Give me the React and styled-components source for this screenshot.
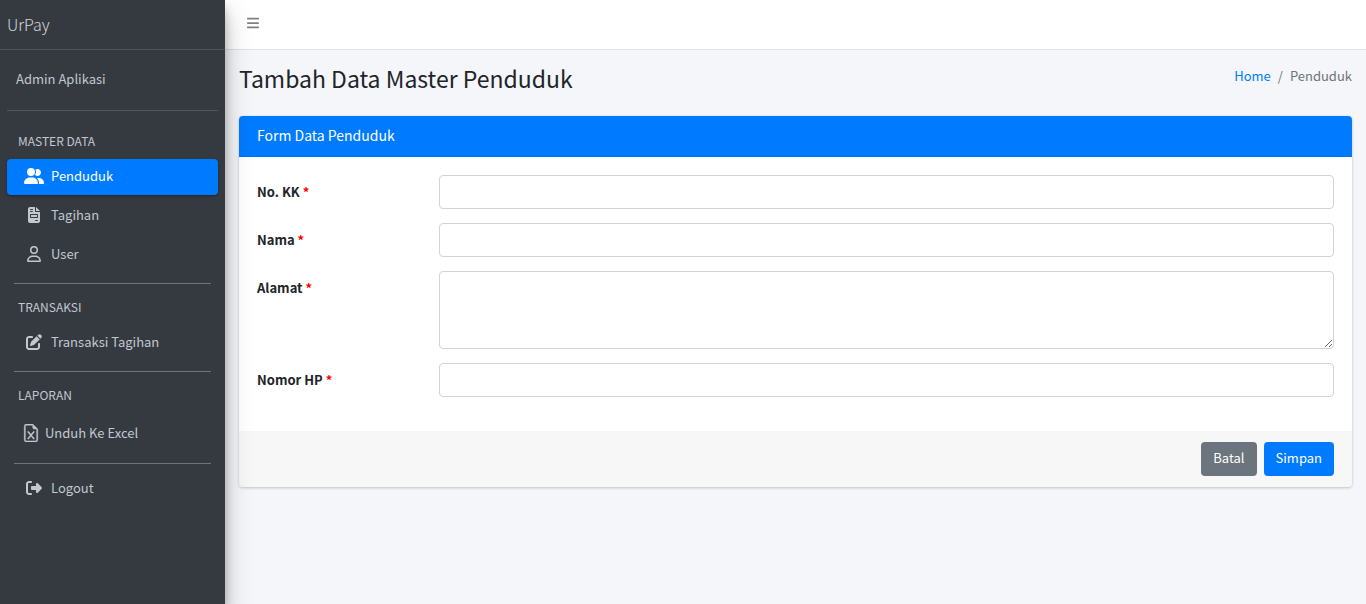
import React from "react";
import styled, { createGlobalStyle, css } from "styled-components";
import { FaBars, FaUserGroup, FaFileInvoice, FaRegUser, FaPenToSquare, FaRightFromBracket } from "react-icons/fa6";
import { BsFileEarmarkExcel } from "react-icons/bs";

const GlobalStyle = createGlobalStyle`
  *, *::before, *::after { box-sizing: border-box; }
  body {
    margin: 0;
    background: #f4f6f9;
    color: #212529;
    font-family: "Noto Sans CJK SC", "Noto Sans", sans-serif;
    font-size: 13px;
    line-height: 22px;
  }
  input, textarea, button { font: inherit; color: inherit; }
`;

const Page = styled.div`
  display: flex;
  min-height: 100vh;
`;

const Sidebar = styled.aside`
  position: relative;
  flex: 0 0 225px;
  background: #343a40;
  color: #c2c7d0;
  box-shadow: 0 13px 25px rgba(0, 0, 0, 0.25), 0 9px 9px rgba(0, 0, 0, 0.22);
`;

const Brand = styled.a`
  display: block;
  height: 50px;
  padding: 13px 7px;
  border-bottom: 1px solid #4b545c;
  color: rgba(255, 255, 255, 0.8);
  font-size: 16px;
  font-weight: 300;
  text-decoration: none;
`;

const SidebarBody = styled.div`
  padding: 0 7px;
`;

const UserPanel = styled.div`
  height: 61px;
  padding: 18px 9px;
  border-bottom: 1px solid #4f5962;
`;

const Menu = styled.nav`
  display: flex;
  flex-direction: column;
  padding-top: 14px;
`;

const MenuHeader = styled.h2`
  margin: 0;
  padding: 5px 11px 7px;
  font-size: 12px;
  font-weight: 400;
  line-height: 22px;
`;

const MenuLink = styled.a`
  display: flex;
  align-items: center;
  gap: ${(p) => (p.$compact ? "5px" : "4px")};
  height: ${(p) => (p.$compact ? "40px" : "36px")};
  margin-bottom: 3px;
  padding: ${(p) => (p.$compact ? "0 14px" : "0 14px 2px")};
  border-radius: 4px;
  color: inherit;
  text-decoration: none;
  ${(p) =>
    p.$active &&
    css`
      background: #007bff;
      color: #fff;
      box-shadow: 0 1px 3px rgba(0, 0, 0, 0.12), 0 1px 2px rgba(0, 0, 0, 0.24);
    `}
`;

const MenuIcon = styled.span`
  display: flex;
  justify-content: center;
  width: 26px;
  svg {
    width: ${(p) => (p.$wide ? "20px" : "16px")};
    height: 16px;
  }
  ${(p) =>
    p.$compact &&
    css`
      width: 19px;
      svg {
        width: 18px;
        height: 18px;
        stroke: currentColor;
        stroke-width: 0.4;
      }
    `}
`;

const Divider = styled.hr`
  width: calc(100% - 14px);
  margin: 7px;
  border: 0;
  border-top: 1px solid #6c757d;
`;

const Main = styled.div`
  flex: 1;
  min-width: 0;
`;

const Topbar = styled.header`
  display: flex;
  align-items: center;
  height: 50px;
  padding: 0 21px 3px;
  border-bottom: 1px solid #dee2e6;
  background: #fff;
`;

const ToggleButton = styled.button`
  display: flex;
  padding: 0;
  border: 0;
  background: none;
  color: #808080;
  font-size: 14px;
`;

const Content = styled.main`
  padding: 14px;
`;

const ContentHeader = styled.div`
  display: flex;
  justify-content: space-between;
  align-items: flex-start;
  margin-bottom: 23px;
`;

const PageTitle = styled.h1`
  margin: 0;
  font-size: 23px;
  font-weight: 400;
  line-height: 29px;
`;

const Breadcrumb = styled.nav`
  display: flex;
  gap: 7px;
  padding-top: 1px;
  color: #6c757d;
  a { color: #007bff; text-decoration: none; }
`;

const Card = styled.form`
  border-radius: 4px;
  background: #fff;
  box-shadow: 0 0 1px rgba(0, 0, 0, 0.13), 0 1px 3px rgba(0, 0, 0, 0.2);
  overflow: hidden;
`;

const CardHeader = styled.h2`
  margin: 0;
  padding: 8px 18px 10px;
  border-bottom: 1px solid #0071eb;
  background: #007bff;
  color: #fff;
  font-size: 14px;
  font-weight: 400;
  line-height: 22px;
`;

const CardBody = styled.div`
  display: flex;
  flex-direction: column;
  gap: 14px;
  padding: 18px 18px 34px;
`;

const FormRow = styled.div`
  display: grid;
  grid-template-columns: 1fr 5fr;
  column-gap: 3px;
  align-items: start;
`;

const Label = styled.label`
  padding-top: 6px;
  font-weight: 700;
`;

const Required = styled.span`
  color: red;
`;

const Control = styled.input`
  display: block;
  width: 100%;
  height: ${(p) => (p.as === "textarea" ? "78px" : "34px")};
  padding: 5px 11px;
  border: 1px solid #ced4da;
  border-radius: 4px;
  background: #fff;
  resize: vertical;
`;

const CardFooter = styled.div`
  display: flex;
  justify-content: flex-end;
  gap: 7px;
  padding: 11px 18px;
  background: #f7f7f7;
`;

const Button = styled.button`
  height: 34px;
  padding: 0 12px 2px;
  border: 0;
  border-radius: 4px;
  background: ${(p) => (p.$primary ? "#007bff" : "#6c757d")};
  color: #fff;
`;

function MenuItem({ icon: Icon, label, active, compact, wide }) {
  return (
    <MenuLink href="#" $active={active} $compact={compact} aria-current={active ? "page" : undefined}>
      <MenuIcon $compact={compact} $wide={wide}><Icon aria-hidden="true" /></MenuIcon>
      {label}
    </MenuLink>
  );
}

function Field({ id, label, multiline }) {
  return (
    <FormRow>
      <Label htmlFor={id}>{label} <Required>*</Required></Label>
      <Control id={id} name={id} as={multiline ? "textarea" : "input"} required />
    </FormRow>
  );
}

export default function App() {
  return (
    <>
      <GlobalStyle />
      <Page>
        <Sidebar>
          <Brand href="#">UrPay</Brand>
          <SidebarBody>
            <UserPanel>Admin Aplikasi</UserPanel>
            <Menu>
              <MenuHeader>MASTER DATA</MenuHeader>
              <MenuItem icon={FaUserGroup} label="Penduduk" active wide />
              <MenuItem icon={FaFileInvoice} label="Tagihan" />
              <MenuItem icon={FaRegUser} label="User" />
              <Divider />
              <MenuHeader>TRANSAKSI</MenuHeader>
              <MenuItem icon={FaPenToSquare} label="Transaksi Tagihan" />
              <Divider />
              <MenuHeader>LAPORAN</MenuHeader>
              <MenuItem icon={BsFileEarmarkExcel} label="Unduh Ke Excel" compact />
              <Divider />
              <MenuItem icon={FaRightFromBracket} label="Logout" />
            </Menu>
          </SidebarBody>
        </Sidebar>
        <Main>
          <Topbar>
            <ToggleButton type="button" aria-label="Menu"><FaBars /></ToggleButton>
          </Topbar>
          <Content>
            <ContentHeader>
              <PageTitle>Tambah Data Master Penduduk</PageTitle>
              <Breadcrumb aria-label="Breadcrumb">
                <a href="#">Home</a>
                <span>/</span>
                <span>Penduduk</span>
              </Breadcrumb>
            </ContentHeader>
            <Card onSubmit={(e) => e.preventDefault()}>
              <CardHeader>Form Data Penduduk</CardHeader>
              <CardBody>
                <Field id="no_kk" label="No. KK" />
                <Field id="nama" label="Nama" />
                <Field id="alamat" label="Alamat" multiline />
                <Field id="nomor_hp" label="Nomor HP" />
              </CardBody>
              <CardFooter>
                <Button type="button">Batal</Button>
                <Button type="submit" $primary>Simpan</Button>
              </CardFooter>
            </Card>
          </Content>
        </Main>
      </Page>
    </>
  );
}
